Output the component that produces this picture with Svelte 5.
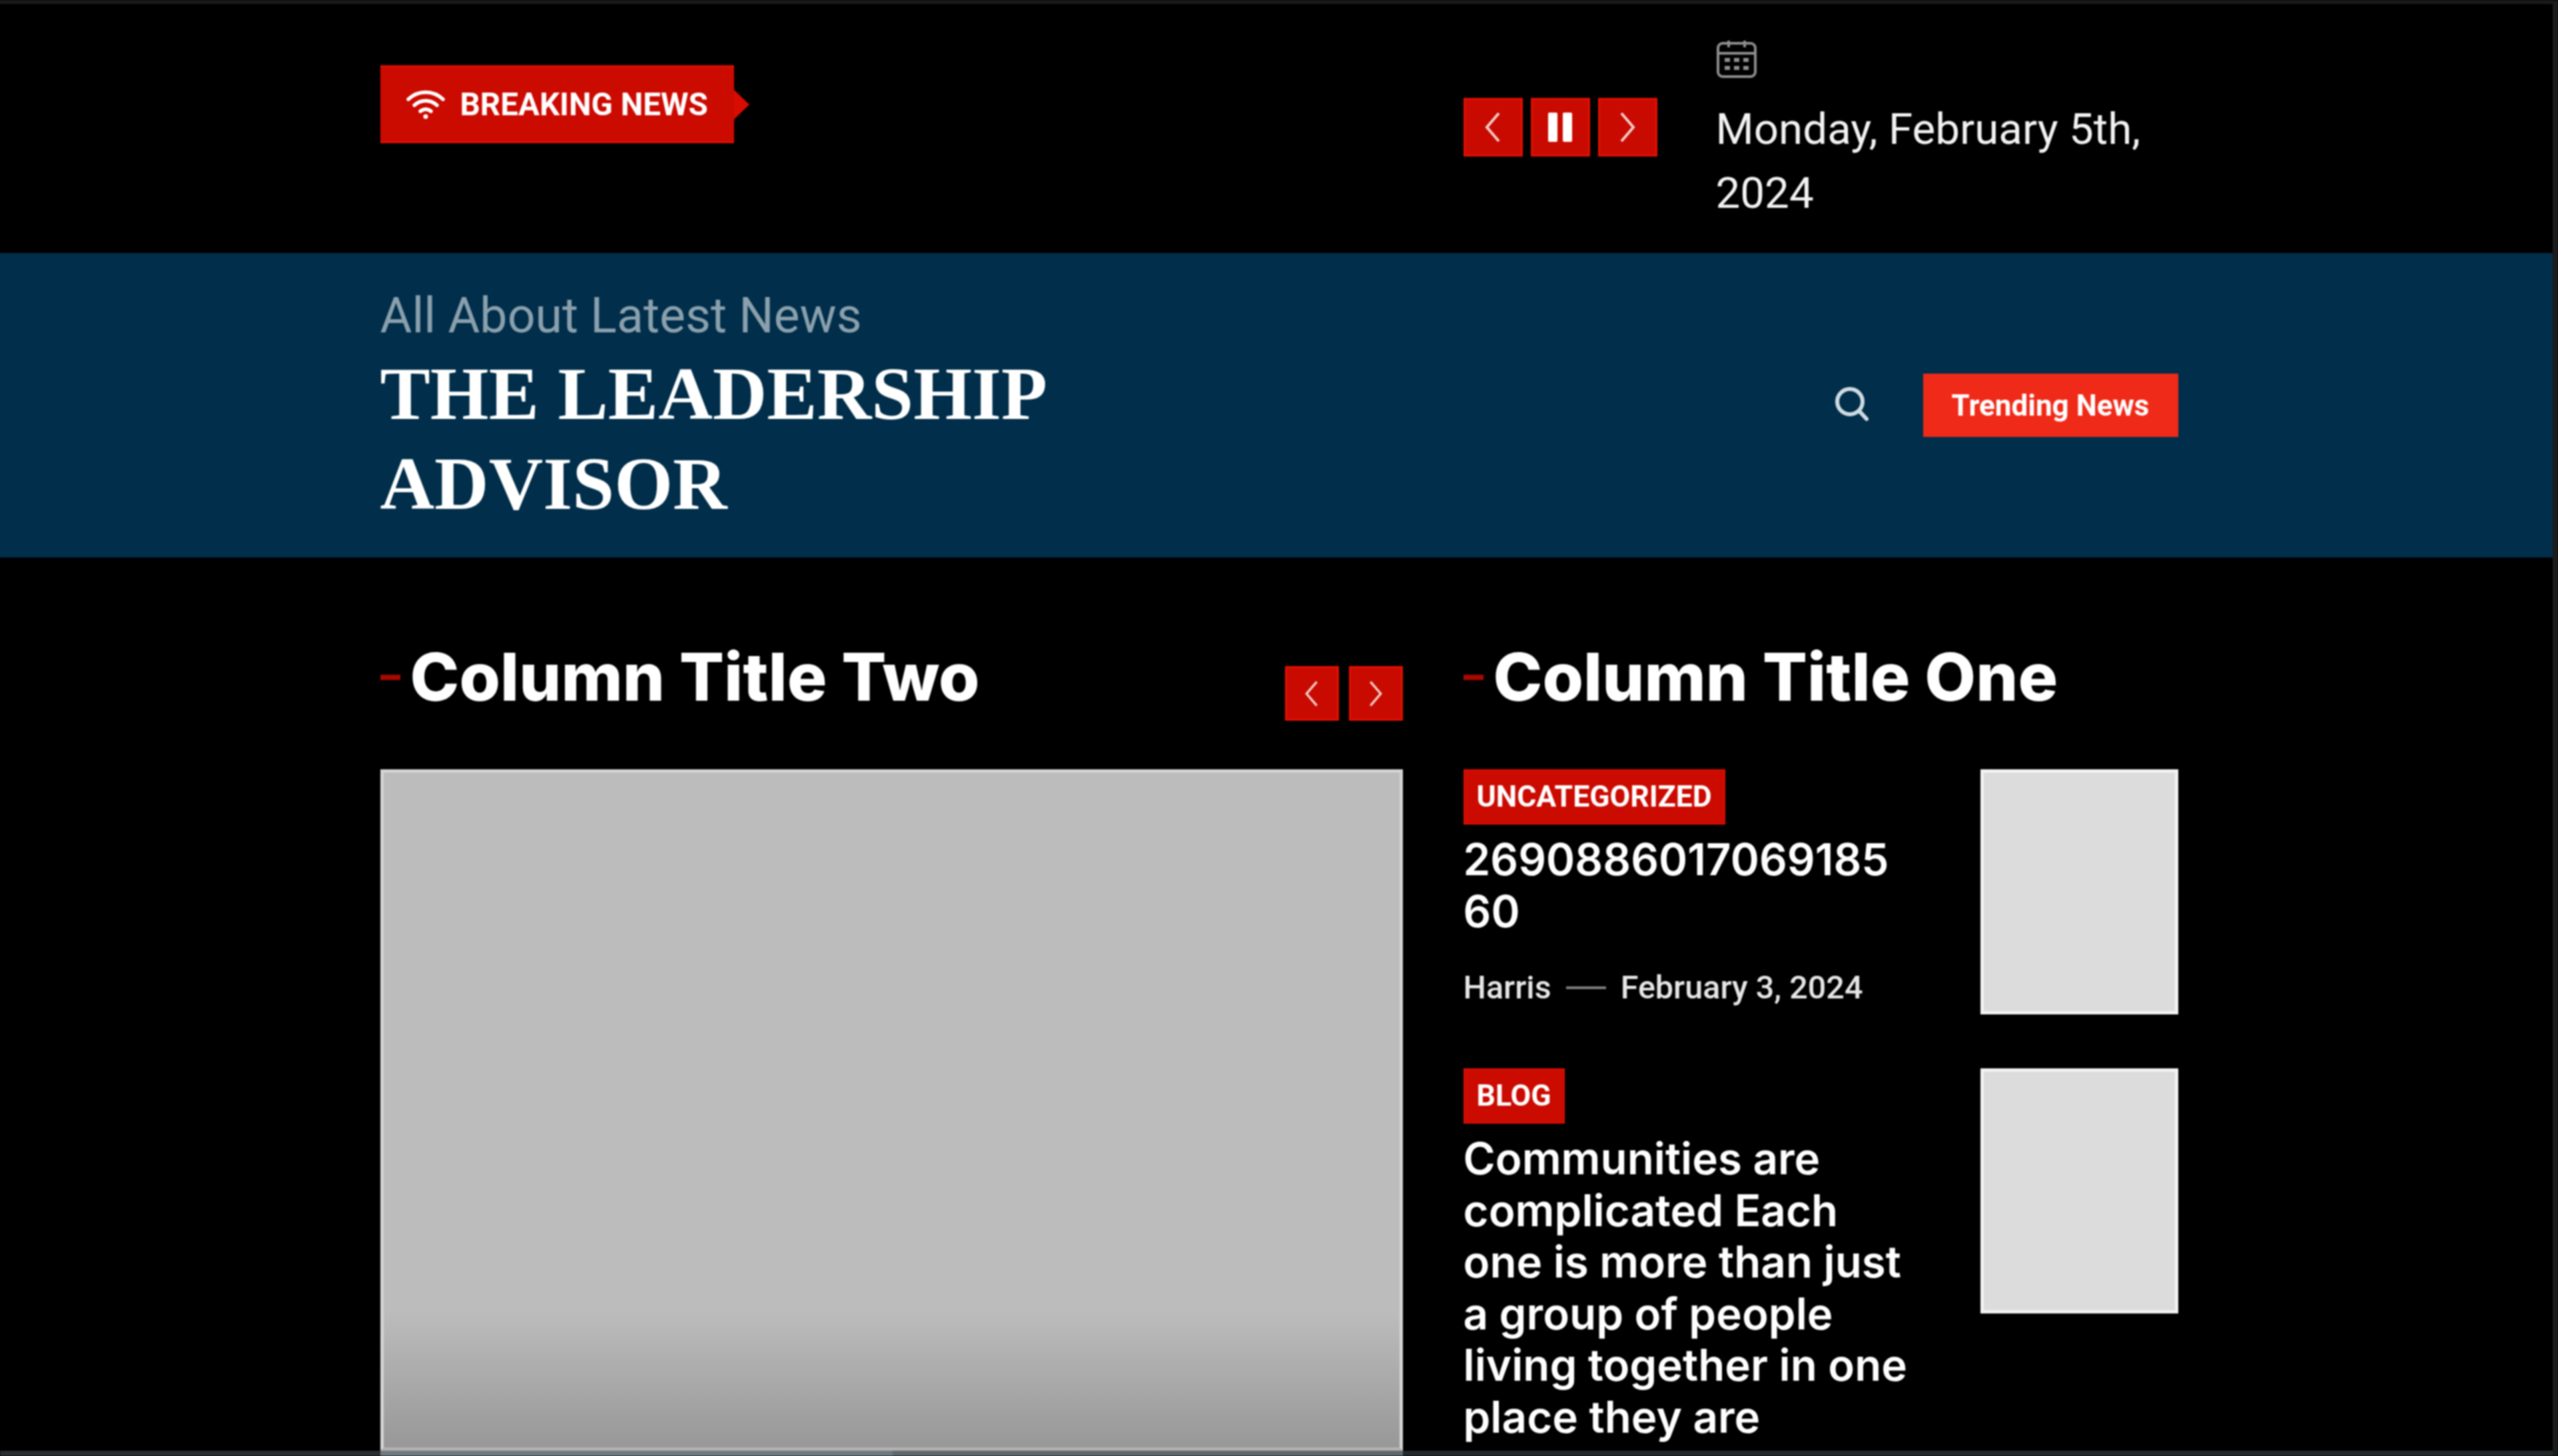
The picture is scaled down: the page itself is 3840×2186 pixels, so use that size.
<script lang="ts">
	const posts = [
		{
			category: 'UNCATEGORIZED',
			title: '269088601706918560',
			author: 'Harris',
			date: 'February 3, 2024'
		},
		{
			category: 'BLOG',
			title: 'Communities are complicated Each one is more than just a group of people living together in one place they are connected to all',
			author: 'Harris',
			date: 'February 3, 2024'
		}
	];
</script>

{#snippet chevron(dir: string)}
	<svg width="28" height="48" viewBox="0 0 28 48" fill="none" stroke="currentColor" stroke-width="4">
		{#if dir === 'left'}
			<path d="M23 3 5 24l18 21" />
		{:else}
			<path d="M5 3l18 21L5 45" />
		{/if}
	</svg>
{/snippet}

<div class="page">
	<div class="wrap columns top">
		<div class="badge">
			<svg class="wifi" width="58" height="44" viewBox="0 0 58 44" fill="none" stroke="currentColor" stroke-width="5.5" stroke-linecap="round">
				<path d="M3 14C18 0 40 0 55 14" />
				<path d="M12 23c10-9 24-9 34 0" />
				<path d="M21 32c5-4 11-4 16 0" />
				<circle cx="29" cy="40" r="3.5" fill="currentColor" stroke="none" />
			</svg>
			<span>BREAKING NEWS</span>
		</div>
		<div class="top-right">
			<div class="nav">
				<button class="nav-btn" aria-label="Previous">{@render chevron('left')}</button>
				<button class="nav-btn pause" aria-label="Pause">
					<svg width="44" height="44" viewBox="0 0 44 44" fill="currentColor">
						<rect x="4" y="0" width="14" height="44" rx="2" />
						<rect x="26" y="0" width="14" height="44" rx="2" />
					</svg>
				</button>
				<button class="nav-btn" aria-label="Next">{@render chevron('right')}</button>
			</div>
			<div class="date">
				<svg width="62" height="58" viewBox="0 0 62 58" fill="none" stroke="#8d8d8d" stroke-width="4">
					<rect x="3" y="5" width="56" height="50" rx="7" />
					<path d="M3 20h56M19 1v10M43 1v10" />
					<path d="M13 30h8M27 30h8M41 30h8M13 42h8M27 42h8M41 42h8" stroke-width="6" />
				</svg>
				<p>Monday, February 5th, 2024</p>
			</div>
		</div>
	</div>

	<header class="masthead">
		<div class="wrap masthead-inner">
			<div class="brand">
				<p class="tagline">All About Latest News</p>
				<h1>THE LEADERSHIP ADVISOR</h1>
			</div>
			<div class="actions">
				<svg class="search" width="52" height="54" viewBox="0 0 52 54" fill="none" stroke="currentColor" stroke-width="6">
					<circle cx="24" cy="24" r="19" />
					<path d="M38 38l11 12" stroke-linecap="round" />
				</svg>
				<button class="trending">Trending News</button>
			</div>
		</div>
	</header>

	<main class="wrap columns content">
		<section>
			<div class="section-head">
				<h2>Column Title Two</h2>
				<div class="nav small">
					<button class="nav-btn" aria-label="Previous">{@render chevron('left')}</button>
					<button class="nav-btn" aria-label="Next">{@render chevron('right')}</button>
				</div>
			</div>
			<div class="feature"></div>
		</section>

		<section>
			<div class="section-head">
				<h2>Column Title One</h2>
			</div>
			<div class="posts">
				{#each posts as post}
					<article class="post">
						<div class="post-text">
							<span class="category">{post.category}</span>
							<h3>{post.title}</h3>
							<div class="meta">
								<span>{post.author}</span>
								<i></i>
								<span>{post.date}</span>
							</div>
						</div>
						<div class="thumb"></div>
					</article>
				{/each}
			</div>
		</section>
	</main>

	<div class="bottom-edge"></div>
</div>

<style>
	:global(body) {
		margin: 0;
		background: #000;
		overflow: hidden;
	}

	/* soft edge of the upscaled capture; the extra left width keeps the blur off the window edge */
	.page {
		position: relative;
		width: 3846px;
		height: 2186px;
		margin-left: -6px;
		padding-left: 6px;
		overflow: hidden;
		box-sizing: border-box;
		border-top: 6px solid #1a1a1a;
		border-right: 8px solid #1c1c1c;
		background: #000;
		color: #fff;
		font-family: Roboto, sans-serif;
		filter: blur(1.3px);
	}

	.wrap {
		width: 2699px;
		margin: 0 auto;
		padding-left: 8px;
		box-sizing: content-box;
	}

	.columns {
		display: grid;
		grid-template-columns: 1535px 1073px;
		column-gap: 91px;
	}

	.top {
		height: 374px;
	}

	.badge {
		position: relative;
		display: flex;
		align-items: center;
		gap: 23px;
		box-sizing: border-box;
		width: 531px;
		height: 117px;
		margin-top: 92px;
		padding-left: 39px;
		background: #cb0a00;
		border: 3px solid #e01000;
		border-left-width: 0;
		border-right-width: 0;
		font-weight: 700;
		font-size: 47.5px;
	}

	.badge::after {
		content: '';
		position: absolute;
		left: 100%;
		top: 34px;
		border-left: 23px solid #d80c00;
		border-top: 22px solid transparent;
		border-bottom: 22px solid transparent;
	}

	.top-right {
		display: flex;
		align-items: flex-start;
		gap: 88px;
	}

	.nav {
		display: flex;
		gap: 12px;
		margin-top: 141px;
	}

	.nav-btn {
		display: flex;
		align-items: center;
		justify-content: center;
		box-sizing: border-box;
		width: 89px;
		height: 88px;
		padding: 0;
		background: #c90a00;
		border: 3px solid #e21000;
		color: #f3d0cc;
		cursor: pointer;
	}

	.nav-btn.pause {
		color: #fff;
	}

	.nav.small {
		gap: 15px;
		margin-top: 0;
	}

	.nav.small .nav-btn {
		width: 81px;
		height: 82px;
	}

	.nav.small .nav-btn svg {
		width: 24px;
		height: 41px;
	}

	.date {
		margin-top: 54px;
		width: 690px;
	}

	.date svg {
		display: block;
	}

	.date p {
		margin: 28px 0 0;
		font-size: 65.5px;
		line-height: 96px;
		color: #f2f2f2;
	}

	.masthead {
		height: 457px;
		margin-left: -6px;
		padding-left: 6px;
		background: #012e4a;
	}

	.masthead-inner {
		display: flex;
		align-items: center;
		justify-content: space-between;
		height: 100%;
	}

	.brand {
		padding-top: 8px;
	}

	.tagline {
		margin: -3px 0 0;
		font-size: 73.5px;
		line-height: 90px;
		font-weight: 400;
		color: #8aa0ad;
	}

	h1 {
		width: 1100px;
		margin: 4px 0 0;
		font-family: 'Liberation Serif', serif;
		font-size: 113px;
		line-height: 135px;
		font-weight: 700;
	}

	.actions {
		display: flex;
		align-items: center;
		gap: 82px;
	}

	.search {
		color: #cfdbe2;
		margin-top: -6px;
	}

	.trending {
		width: 383px;
		height: 95px;
		padding: 0;
		border: none;
		background: #f02a18;
		color: #fff;
		font-family: Roboto, sans-serif;
		font-weight: 700;
		font-size: 44px;
		cursor: pointer;
	}

	.section-head {
		display: flex;
		align-items: flex-start;
		justify-content: space-between;
		height: 318px;
		box-sizing: border-box;
		padding-top: 163px;
	}

	h2 {
		position: relative;
		margin: -41px 0 0;
		padding-left: 45px;
		font-family: Inter, sans-serif;
		font-weight: 800;
		font-size: 99.5px;
		line-height: 115px;
	}

	h2::before {
		content: '';
		position: absolute;
		left: 0;
		top: 54px;
		width: 30px;
		height: 8px;
		background: #a80800;
	}

	.feature {
		box-sizing: border-box;
		height: 1023px;
		background: linear-gradient(#bcbcbc 0, #bcbcbc 80%, #989898 100%);
		border: 5px solid #d4d4d4;
		border-bottom-color: #b4b2b0;
	}

	.posts {
		display: flex;
		flex-direction: column;
		gap: 81px;
	}

	.post {
		display: flex;
		align-items: flex-start;
		justify-content: space-between;
	}

	.post-text {
		width: 670px;
	}

	.category {
		display: inline-block;
		box-sizing: border-box;
		height: 83px;
		padding: 0 18px;
		background: #cb0a00;
		border: 2px solid #dd0f00;
		font-weight: 700;
		font-size: 44.5px;
		line-height: 79px;
	}

	h3 {
		margin: 14px 0 0;
		font-family: Inter, sans-serif;
		font-weight: 600;
		font-size: 65.5px;
		line-height: 77.5px;
		overflow-wrap: anywhere;
	}

	.meta {
		display: flex;
		align-items: center;
		gap: 22px;
		margin-top: 49px;
		font-weight: 500;
		font-size: 48.5px;
		line-height: 54px;
		color: #e6e6e6;
	}

	.meta i {
		width: 60px;
		height: 4px;
		background: #7f7f7f;
	}

	.thumb {
		box-sizing: border-box;
		width: 297px;
		height: 368px;
		background: #dcdcdc;
		border: 5px solid #f3f3f3;
	}

	.bottom-edge {
		position: absolute;
		left: 6px;
		right: 0;
		bottom: 0;
		height: 8px;
		background: linear-gradient(90deg, #2a2e30 571px, #6f7a80 571px, #6f7a80 1340px, #5f686d 1340px, #5f686d 2106px, #24282a 2106px);
	}
</style>
